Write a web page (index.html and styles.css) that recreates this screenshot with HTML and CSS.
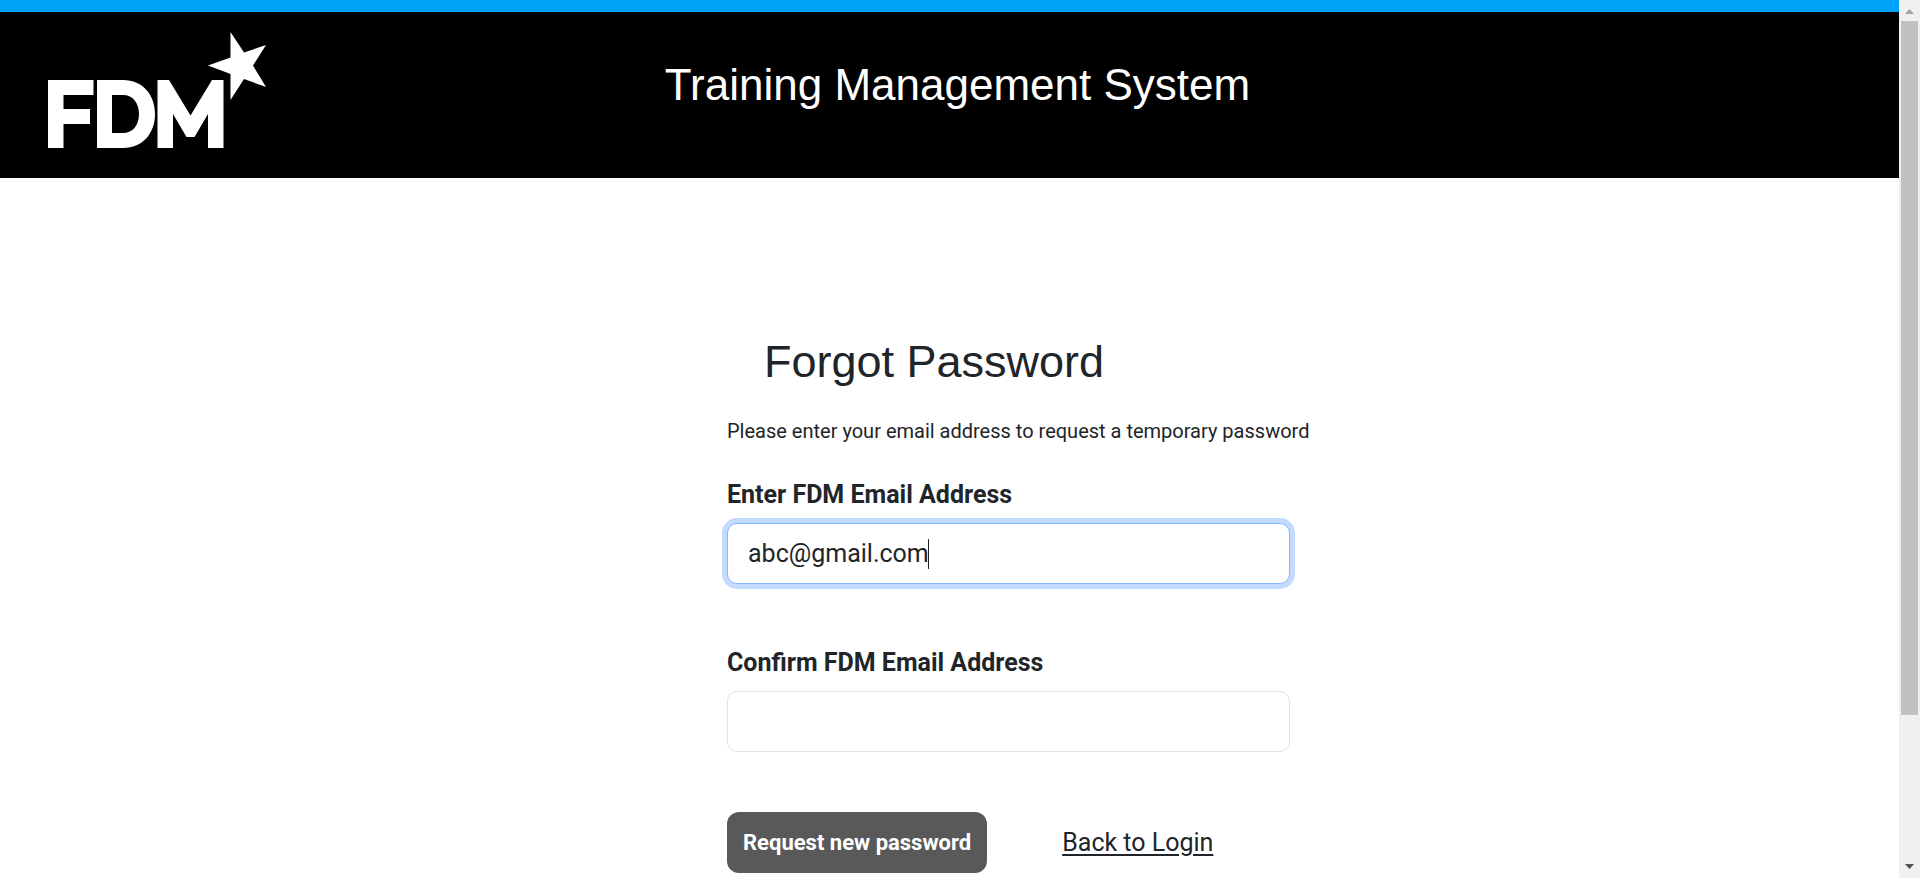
FILE: index.html
```html
<!DOCTYPE html>
<html lang="en">
<head>
<meta charset="utf-8">
<meta name="viewport" content="width=device-width, initial-scale=1">
<title>Training Management System</title>
<link rel="stylesheet" href="styles.css">
</head>
<body>
<div class="app">
  <div class="page">
    <header class="header">
      <svg class="logo" viewBox="0 0 220 118" role="img" aria-label="FDM">
        <g fill="#fff">
          <path d="M0 48H45.500V63H15.500V77H42V92H15.500V116H0Z"/>
          <path fill-rule="evenodd" d="M49 48H75C95 48 107 63 107 82S95 116 75 116H49ZM64 63V101H75C85 101 91 93 91 82S85 63 75 63Z"/>
          <path d="M109.500 48H121L142.500 83.500L164 48H175.500V116H160V82L146.500 105H138.500L125 82V116H109.500Z"/>
          <path d="M182.500 0L196 20.500L218 13L205 33.500L218 55L196 47L182.500 68V42L160 33.500L182.500 25.500Z"/>
        </g>
      </svg>
      <p class="header-title">Training Management System</p>
    </header>
    <main class="main">
      <form class="form">
        <h1 class="form-title">Forgot Password</h1>
        <p class="hint">Please enter your email address to request a temporary password</p>
        <div class="field">
          <label class="label" for="email">Enter FDM Email Address</label>
          <input class="input" id="email" type="text" value="abc@gmail.com" autofocus>
          <span class="caret" aria-hidden="true"></span>
        </div>
        <div class="field">
          <label class="label" for="confirm">Confirm FDM Email Address</label>
          <input class="input" id="confirm" type="text">
        </div>
        <div class="actions">
          <button class="submit" type="button">Request new password</button>
          <a class="back" href="#">Back to Login</a>
        </div>
      </form>
    </main>
  </div>
  <div class="scrollbar" aria-hidden="true">
    <svg class="arrow" viewBox="0 0 21 21"><path d="M6 14L10.500 9L15 14Z" fill="#a3a3a3"/></svg>
    <div class="track"><div class="thumb"></div></div>
    <svg class="arrow" viewBox="0 0 21 21"><path d="M6 7H15L10.500 12Z" fill="#505050"/></svg>
  </div>
</div>
</body>
</html>
```
FILE: styles.css
```css
* {
  box-sizing: border-box;
}

body {
  margin: 0;
  color: #212529;
  background: #fff;
  font-family: Roboto, sans-serif;
  font-size: 20px;
}

.app {
  display: flex;
  height: 100vh;
  overflow: hidden;
}

.page {
  flex: 1;
  min-width: 0;
}

.header {
  display: grid;
  grid-template-columns: 240px 1fr 240px;
  align-items: start;
  padding: 20px 32px 28px 48px;
  background: #000;
  border-top: 12px solid #00a3fa;
}

.logo {
  display: block;
  width: 220px;
  height: 118px;
}

.header-title {
  margin: 26px 0 0;
  color: #fff;
  font: 44px/54px "Liberation Sans", Arial, sans-serif;
  text-align: center;
}

.main {
  display: grid;
  grid-template-columns: 727fr 563fr 609fr;
  padding-top: 157px;
}

.form {
  grid-column: 2;
  min-width: 0;
}

.form-title {
  margin: 0 0 27px;
  padding-left: 37px;
  font: 45px/54px "Liberation Sans", Arial, sans-serif;
}

.hint {
  margin: 0 0 30px;
  font-size: 20px;
  line-height: 30px;
  white-space: nowrap;
}

.field {
  position: relative;
  margin-bottom: 60px;
}

.label {
  display: block;
  margin-bottom: 9px;
  font-size: 25px;
  line-height: 38px;
  font-weight: 700;
}

.input {
  display: block;
  width: 100%;
  height: 61px;
  padding: 0 20px;
  border: 1px solid #dee2e6;
  border-radius: 10px;
  outline: none;
  color: #212529;
  background: #fff;
  font: 25px/38px Roboto, sans-serif;
  caret-color: transparent;
}

.input:focus {
  border-color: #86b7fe;
  box-shadow: 0 0 0 5px #c2dbfe;
}

.caret {
  position: absolute;
  left: 201px;
  bottom: 15px;
  width: 1px;
  height: 30px;
  background: #212529;
}

.actions {
  display: flex;
  align-items: center;
  gap: 75px;
}

.submit {
  height: 61px;
  padding: 0 16px;
  border: 0;
  border-radius: 12px;
  color: #fff;
  background: #595959;
  font: 700 22px/38px Roboto, sans-serif;
  white-space: nowrap;
}

.back {
  color: #212529;
  font-size: 25px;
  line-height: 38px;
  text-underline-offset: 3px;
}

.scrollbar {
  display: flex;
  flex-direction: column;
  width: 21px;
  background: #f0f0f0;
}

.arrow {
  display: block;
  width: 21px;
  height: 21px;
}

.track {
  flex: 1;
  padding: 0 2px;
}

.thumb {
  height: 83%;
  background: #c1c1c1;
}
```
